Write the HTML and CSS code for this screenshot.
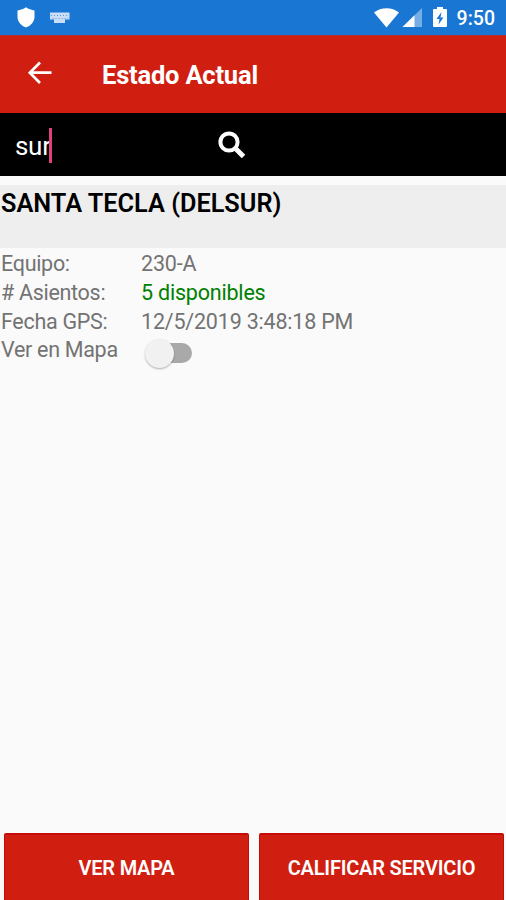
FILE: index.html
```html
<!DOCTYPE html>
<html lang="es">
<head>
<meta charset="utf-8">
<title>Estado Actual</title>
<link rel="stylesheet" href="styles.css">
</head>
<body>
<div class="screen">
  <div class="status">
    <svg class="status-left" width="54" height="22" viewBox="0 0 54 22">
      <path fill="#fff" d="M9 0.300 C11.500 2 14.500 2.900 17.500 3.400 V10 C17.500 15 13.500 19 9 20.500 C4.500 19 0.500 15 0.500 10 V3.400 C3.500 2.900 6.500 2 9 .3Z"/>
      <path fill="#c9ddf6" d="M33 5.500H52.500V12.500H48V16H37V12.500H33Z"/>
      <path stroke="#1976d2" stroke-width="1" stroke-dasharray="1 2" opacity=".65" fill="none" d="M34 8.500H52M35.500 11.500H51"/>
    </svg>
    <div class="status-right">
      <svg width="76" height="22" viewBox="0 0 76 22">
        <path fill="#fff" d="M0 5.500C7-.2 18-.2 25 5.500L12.500 20.500Z"/>
        <path fill="#75ade5" d="M48 1V20H28.500Z"/>
        <path fill="#fff" d="M40.500 8.300V20H28.500Z"/>
        <path fill="#fff" d="M63 0H69V2H72Q73 2 73 3V19Q73 20 72 20H60Q59 20 59 19V3Q59 2 60 2H63Z"/>
        <path fill="#1976d2" d="M67.500 5L62.500 12H65.500L64.500 17.500L69.500 10.500H66.500Z"/>
      </svg>
      <span class="time">9:50</span>
    </div>
  </div>
  <header class="appbar">
    <svg class="back" width="26" height="24" viewBox="0 0 26 24" fill="none" stroke="#fff" stroke-width="2.700"><path d="M25.500 11.700H4M14 1.500L3.800 11.700L14 22"/></svg>
    <h1>Estado Actual</h1>
  </header>
  <div class="search">
    <span class="query">sur</span><span class="caret"></span>
    <svg class="glass" width="28" height="28" viewBox="0 0 28 28" fill="none" stroke="#fff"><circle cx="11" cy="11" r="8.600" stroke-width="4"/><path stroke-width="5" d="M17 17L25.500 25.500"/></svg>
  </div>
  <h2 class="place">SANTA TECLA (DELSUR)</h2>
  <dl class="details">
    <dt>Equipo:</dt><dd>230-A</dd>
    <dt>#&nbsp;Asientos:</dt><dd class="green">5 disponibles</dd>
    <dt>Fecha GPS:</dt><dd>12/5/2019 3:48:18 PM</dd>
    <dt>Ver en Mapa</dt><dd><span class="switch"><span class="thumb"></span></span></dd>
  </dl>
  <div class="actions">
    <button>VER MAPA</button>
    <button>CALIFICAR SERVICIO</button>
  </div>
</div>
</body>
</html>
```
FILE: styles.css
```css
* { box-sizing: border-box; }
body { margin: 0; font-family: Roboto, sans-serif; background: #fafafa; }
.screen { width: 506px; height: 900px; display: flex; flex-direction: column; overflow: hidden; }
.status { height: 35px; background: #1976d2; display: flex; justify-content: space-between; align-items: flex-start; padding: 7px 11px 0 17px; }
.status-right { display: flex; gap: 7px; }
.time { color: #fff; font-size: 19.500px; font-weight: 500; line-height: 23px; }
.appbar { height: 78px; background: #d01f11; border-top: 1px solid #b52b32; display: flex; align-items: center; padding-left: 26px; }
.back { margin-top: -3px; }
h1 { margin: 1px 0 0 50px; font-size: 25.500px; font-weight: 700; color: #fff; line-height: 30px; letter-spacing: -.2px; }
.search { height: 63px; background: #000; display: flex; align-items: center; padding-left: 15px; }
.query { color: #fff; font-size: 26px; line-height: 32px; margin: 2px -1.500px 0 0; letter-spacing: -.3px; }
.caret { width: 3px; height: 35px; background: #e0407b; margin-top: 1px; }
.glass { margin: 1px 0 0 166px; }
.place { margin: 9px 0 0; height: 63px; background: #eee; color: #000; font-size: 25.300px; font-weight: 600; line-height: 37px; padding-left: 1px; }
.details { margin: 1px 0 0; display: grid; grid-template-columns: 140px 1fr; grid-auto-rows: 28.800px; color: #737373; font-size: 21.500px; line-height: 29px; padding-left: 1px; }
.details dt { letter-spacing: -.3px; }
.details dd { margin: 0; letter-spacing: -.2px; }
.details .green { color: #008000; }
.switch { display: flex; align-items: center; width: 45px; height: 20px; margin: 8px 0 0 6px; border-radius: 10px; background: #a9a9a9; }
.thumb { width: 29px; height: 29px; flex: none; margin-left: -2px; border-radius: 50%; background: #f1f1f1; box-shadow: 0 1px 2px rgba(0,0,0,.3); }
.actions { margin-top: auto; height: 67px; display: grid; grid-template-columns: 245px 245px; gap: 10px; padding-left: 4px; }
.actions button { margin: 0; padding: 1px 0 0; border: 1px solid #c60a05; border-width: 2px 1px 0; border-radius: 2px 2px 0 0; background: #d01f11; color: #fff; font: 600 20px/24px Roboto, sans-serif; letter-spacing: -.2px; }
```
